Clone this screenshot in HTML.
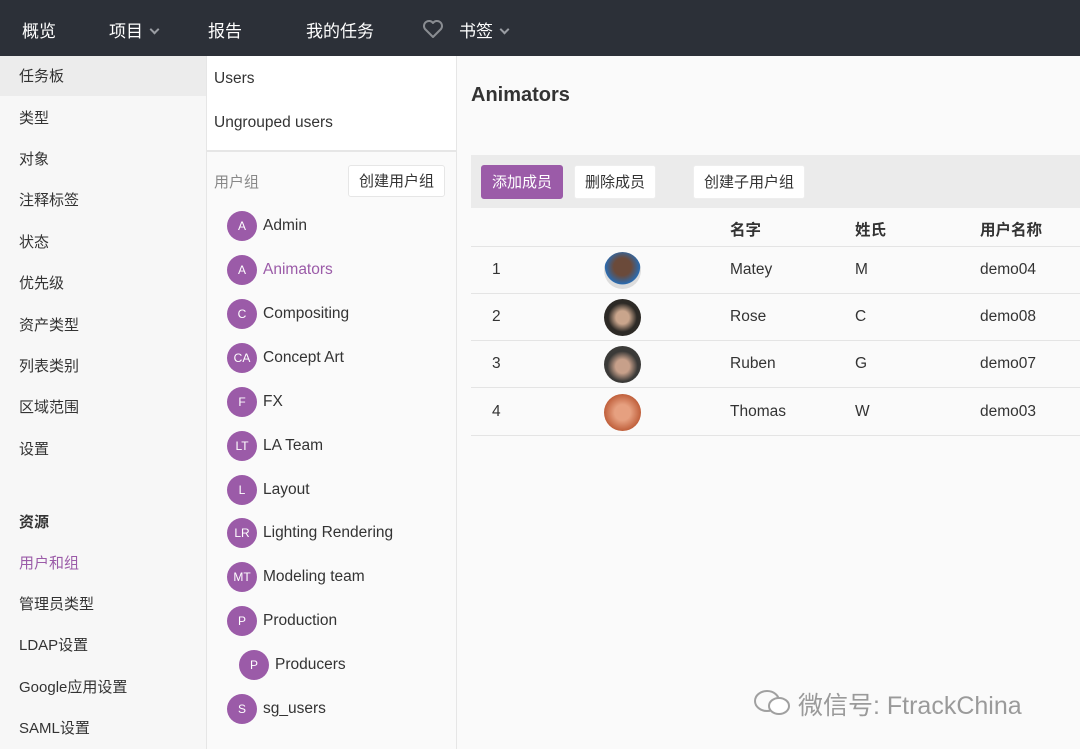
<!DOCTYPE html><html><head><meta charset="utf-8"><style>
*{margin:0;padding:0;box-sizing:border-box}
body{width:1080px;height:749px;overflow:hidden;font-family:"Liberation Sans","Noto Sans CJK SC",sans-serif;background:#f7f7f7;color:#333;position:relative;font-size:15px}
.hdr{position:absolute;left:0;top:0;width:1080px;height:56px;background:#2c3038;color:#fff;font-size:17px}
.hdr span{position:absolute;top:17px}
.chev{display:inline-block;width:7px;height:7px;border-right:2px solid #9a9da3;border-bottom:2px solid #9a9da3;transform:rotate(45deg);margin-left:8px;position:relative;top:-4px}
.side{position:absolute;left:0;top:56px;width:206px;height:693px;background:#f7f7f7}
.side div{position:absolute;left:19px;font-size:15px}
.mid{position:absolute;left:206px;top:56px;width:251px;height:693px;background:#fafafa;border-left:1px solid #e6e6e6;border-right:1px solid #e6e6e6}
.main{position:absolute;left:457px;top:56px;width:623px;height:693px;background:#fafafa}
.g{position:absolute;left:20px;height:30px;font-size:15.5px;display:flex;align-items:center}
.g i{display:inline-block;width:30px;height:30px;border-radius:50%;background:#9b5ba8;color:#fff;font-style:normal;font-size:12px;text-align:center;line-height:30px;margin-right:6px;flex:none}
.btn{position:absolute;top:109px;height:34px;line-height:34px;padding:0 10px;border-radius:3px;background:#fff;font-size:15px;border:1px solid #eee}
.row{position:absolute;left:14px;width:609px;height:47px;border-bottom:1px solid #e4e4e4;font-size:15.5px}
.row span{position:absolute;top:14px}
.av{position:absolute;left:133px;top:5px;width:37px;height:37px;border-radius:50%}
</style></head><body>
<div class="hdr"><span style="left:22px">概览</span><span style="left:109px">项目<i class="chev"></i></span><span style="left:208px">报告</span><span style="left:306px">我的任务</span>
<svg style="position:absolute;left:422px;top:19px" width="22" height="20" viewBox="0 0 22 20"><path d="M11 18 L3 10 A5 5 0 0 1 11 4 A5 5 0 0 1 19 10 Z" fill="none" stroke="#8a8d92" stroke-width="2" stroke-linejoin="round"/></svg>
<span style="left:459px">书签<i class="chev"></i></span></div>
<div class="side"><div style="left:0;top:0;width:206px;height:40px;background:#ececec"></div>
<div style="top:9px">任务板</div><div style="top:51px">类型</div><div style="top:92px">对象</div><div style="top:133px">注释标签</div><div style="top:175px">状态</div><div style="top:216px">优先级</div><div style="top:258px">资产类型</div><div style="top:299px">列表类别</div><div style="top:340px">区域范围</div><div style="top:382px">设置</div>
<div style="top:455px;font-weight:bold">资源</div><div style="top:496px;color:#9b5ba8">用户和组</div><div style="top:537px">管理员类型</div><div style="top:578px">LDAP设置</div><div style="top:620px">Google应用设置</div><div style="top:661px">SAML设置</div></div>
<div class="mid">
<div style="position:absolute;left:0;top:0;width:249px;height:96px;background:#fff;border-bottom:2px solid #e6e6e6"></div>
<div style="position:absolute;left:7px;top:14px;font-size:15.5px">Users</div><div style="position:absolute;left:7px;top:58px;font-size:15.5px">Ungrouped users</div>
<div style="position:absolute;left:7px;top:115px;color:#888">用户组</div>
<div style="position:absolute;left:141px;top:109px;height:32px;line-height:32px;padding:0 10px;background:#fff;border:1px solid #e6e6e6;border-radius:3px">创建用户组</div>
<div class="g" style="top:155px"><i>A</i>Admin</div>
<div class="g" style="top:199px;color:#9b5ba8"><i>A</i>Animators</div>
<div class="g" style="top:243px"><i>C</i>Compositing</div>
<div class="g" style="top:287px"><i>CA</i>Concept Art</div>
<div class="g" style="top:331px"><i>F</i>FX</div>
<div class="g" style="top:375px"><i>LT</i>LA Team</div>
<div class="g" style="top:419px"><i>L</i>Layout</div>
<div class="g" style="top:462px"><i>LR</i>Lighting Rendering</div>
<div class="g" style="top:506px"><i>MT</i>Modeling team</div>
<div class="g" style="top:550px"><i>P</i>Production</div>
<div class="g" style="top:594px;left:32px"><i>P</i>Producers</div>
<div class="g" style="top:638px"><i>S</i>sg_users</div>
</div>
<div class="main">
<div style="position:absolute;left:14px;top:28px;font-size:20px;font-weight:bold;color:#333">Animators</div>
<div style="position:absolute;left:14px;top:99px;width:609px;height:53px;background:#ebebeb"></div>
<div class="btn" style="left:24px;background:#9b5ba8;color:#fff;border-color:#9b5ba8">添加成员</div>
<div class="btn" style="left:117px">删除成员</div>
<div class="btn" style="left:236px">创建子用户组</div>
<div class="row" style="top:152px;height:39px"><span style="left:259px;top:10px;font-weight:bold">名字</span><span style="left:384px;top:10px;font-weight:bold">姓氏</span><span style="left:509px;top:10px;font-weight:bold">用户名称</span></div>
<div class="row" style="top:191px"><span style="left:21px">1</span><i class="av" style="background:radial-gradient(circle at 50% 40%,#6b4a3a 30%,#2a6bb0 60%,#ddd 62%)"></i><span style="left:259px">Matey</span><span style="left:384px">M</span><span style="left:509px">demo04</span></div>
<div class="row" style="top:238px"><span style="left:21px">2</span><i class="av" style="background:radial-gradient(circle at 50% 50%,#c9a58c 25%,#2d2a26 55%)"></i><span style="left:259px">Rose</span><span style="left:384px">C</span><span style="left:509px">demo08</span></div>
<div class="row" style="top:285px"><span style="left:21px">3</span><i class="av" style="background:radial-gradient(circle at 50% 55%,#c7a08a 25%,#3b3a38 55%)"></i><span style="left:259px">Ruben</span><span style="left:384px">G</span><span style="left:509px">demo07</span></div>
<div class="row" style="top:333px"><span style="left:21px">4</span><i class="av" style="background:radial-gradient(circle at 50% 50%,#e6a080 30%,#c0603c 70%)"></i><span style="left:259px">Thomas</span><span style="left:384px">W</span><span style="left:509px">demo03</span></div>
</div>
<svg style="position:absolute;left:752px;top:688px" width="42" height="30" viewBox="0 0 42 30"><ellipse cx="15" cy="13" rx="12" ry="10" fill="none" stroke="#a0a0a0" stroke-width="2"/><ellipse cx="27" cy="18" rx="10" ry="8" fill="#fff" stroke="#a0a0a0" stroke-width="2"/></svg>
<div style="position:absolute;left:798px;top:686px;font-size:25px;color:#9a9a9a">微信号: FtrackChina</div>
</body></html>
